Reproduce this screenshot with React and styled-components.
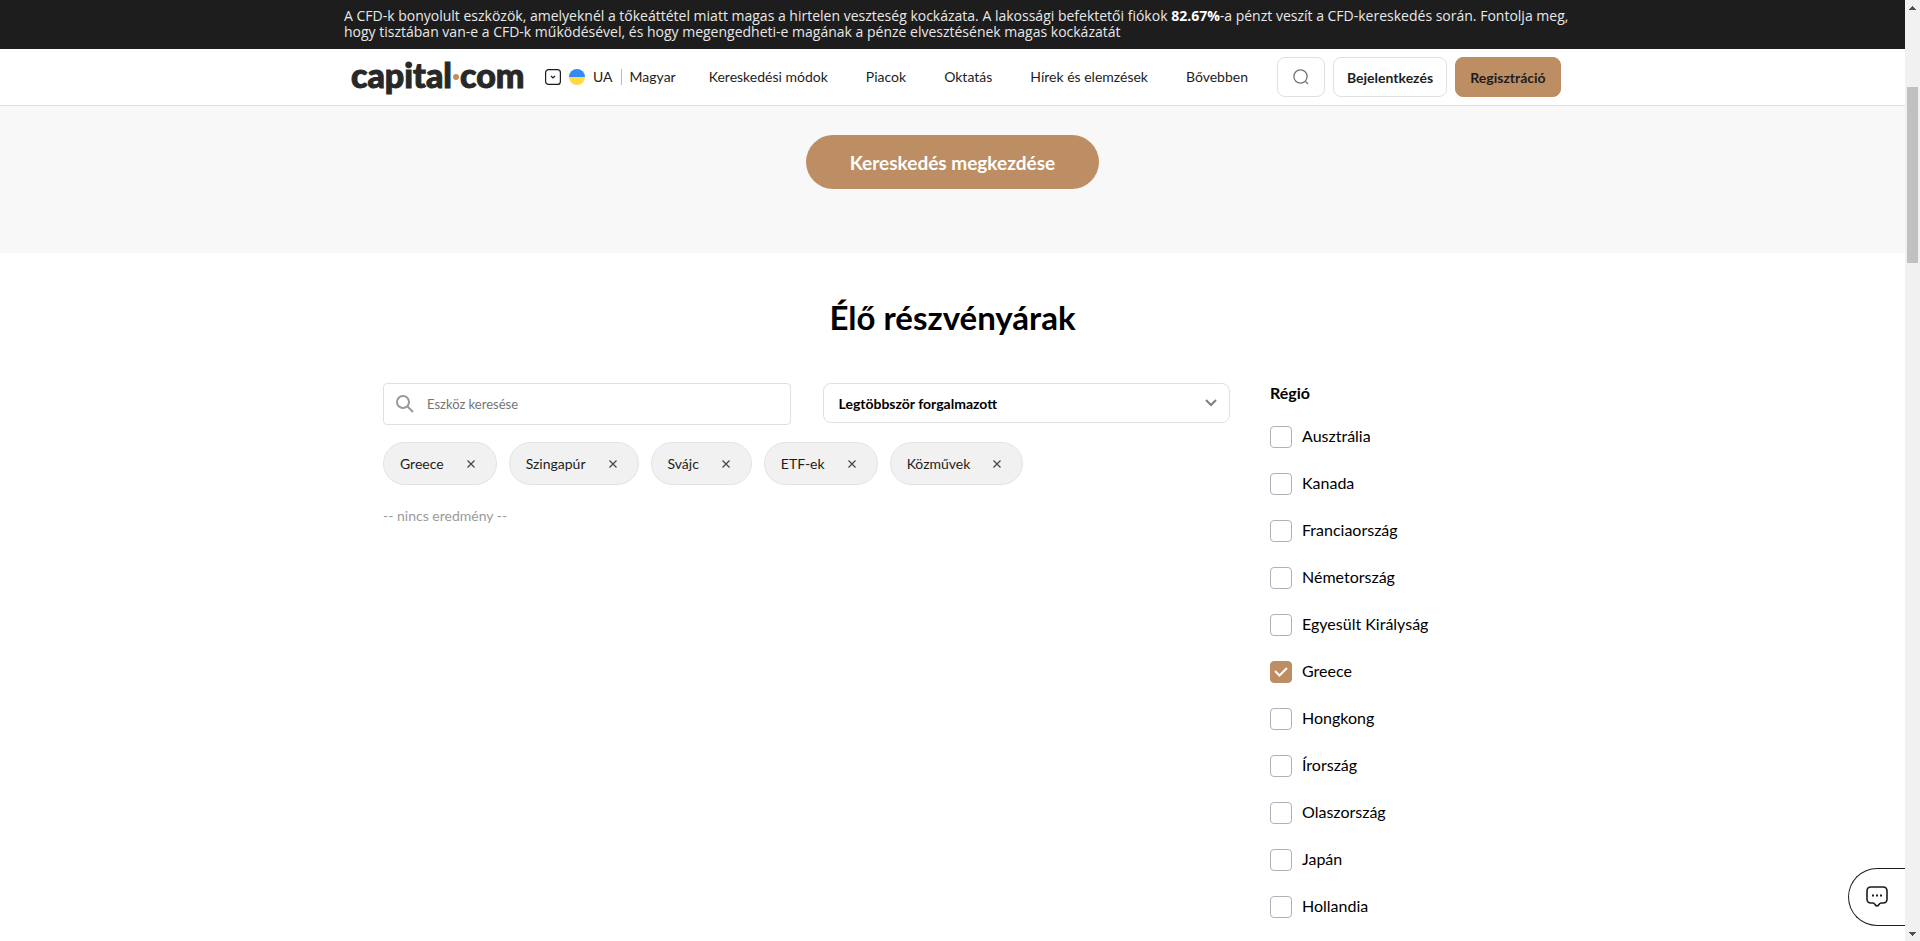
import React, { useState } from "react";
import styled, { createGlobalStyle } from "styled-components";

const GlobalStyle = createGlobalStyle`
  *, *::before, *::after { box-sizing: border-box; }
  body {
    margin: 0;
    background: #fff;
    color: #000;
    font-family: Lato, "Open Sans", sans-serif;
    font-size: 14px;
  }
  button, input, select { font-family: inherit; }
`;

const Frame = styled.div`
  display: grid;
  grid-template-columns: minmax(0, 1fr) 15px;
  height: 100vh;
  overflow: hidden;
`;

const Page = styled.div`
  overflow: hidden;
`;

const Container = styled.div`
  width: 100%;
  max-width: 1217px;
  margin: 0 auto;
`;

const Banner = styled.aside`
  background: #1d1d1d;
  color: #e8e8e8;
  padding: 8px 0 9px;
  font-family: "Open Sans", sans-serif;
  font-size: 14px;
  line-height: 16px;
  p { margin: 0; }
  b { color: #fff; font-weight: 700; }
  @media (min-width: 1400px) {
    white-space: nowrap;
  }
`;

const Header = styled.header`
  background: #fff;
  border-bottom: 1px solid #dedede;
`;

const HeaderRow = styled(Container)`
  display: flex;
  align-items: center;
  height: 56px;
  padding-left: 7px;
`;

const Logo = styled.a`
  display: flex;
  align-items: center;
  width: 171px;
  margin-right: 23px;
  padding-bottom: 4px;
  color: #282828;
  text-decoration: none;
  font-size: 34px;
  line-height: 40px;
  font-weight: 900;
  -webkit-text-stroke: 1px #282828;
`;

const LogoDot = styled.span`
  flex: none;
  width: 6px;
  height: 6px;
  margin: 4px 1px 0;
  border-radius: 50%;
  background: #bd8d63;
`;

const Language = styled.button`
  display: flex;
  align-items: center;
  gap: 8px;
  padding: 0;
  border: 0;
  background: none;
  color: #1d1d1d;
  font-size: 14px;
  line-height: 16px;
`;

const Divider = styled.span`
  width: 1px;
  height: 16px;
  background: #b9b9b9;
`;

const Nav = styled.nav`
  display: flex;
  flex: 1;
  justify-content: space-between;
  margin: 0 29px 0 33px;
`;

const NavLink = styled.a`
  color: #1d1d1d;
  text-decoration: none;
  line-height: 16px;
  white-space: nowrap;
`;

const Actions = styled.div`
  display: flex;
  gap: 8px;
`;

const HeaderButton = styled.button`
  display: flex;
  align-items: center;
  justify-content: center;
  height: 40px;
  min-width: ${(p) => p.$width};
  padding: 0 8px;
  border: 1px solid ${(p) => (p.$primary ? "#bd8d63" : "#e0e0e0")};
  border-radius: 8px;
  background: ${(p) => (p.$primary ? "#bd8d63" : "#fff")};
  color: #1d1d1d;
  font-size: 14px;
  font-weight: 700;
`;

const Hero = styled.section`
  display: flex;
  justify-content: center;
  padding: 29px 0 64px;
  background: #f8f8f8;
`;

const StartButton = styled.button`
  height: 54px;
  min-width: 293px;
  padding: 0 40px;
  border: 0;
  border-radius: 27px;
  background: #bd8d63;
  color: #fff;
  font-size: 19px;
  font-weight: 700;
`;

const Title = styled.h2`
  margin: 0;
  padding: 44px 0 46px;
  text-align: center;
  font-size: 33px;
  line-height: 40px;
  font-weight: 700;
`;

const Content = styled.div`
  display: grid;
  grid-template-columns: minmax(0, 1fr) 252px;
  gap: 40px;
  width: 100%;
  max-width: 1139px;
  margin: 0 auto;
`;

const Filters = styled.form`
  display: grid;
  grid-template-columns: 1fr 1fr;
  align-items: start;
  gap: 32px;
`;

const SearchBox = styled.label`
  display: flex;
  align-items: center;
  gap: 12px;
  height: 42px;
  padding: 0 11px;
  border: 1px solid #e0e0e0;
  border-radius: 4px;
`;

const SearchInput = styled.input`
  flex: 1;
  min-width: 0;
  padding: 0;
  border: 0;
  outline: 0;
  font-size: 13px;
  line-height: 16px;
  &::placeholder { color: #757575; }
`;

const SelectBox = styled.div`
  display: grid;
  align-items: center;
  > * { grid-area: 1 / 1; }
  > svg { justify-self: end; margin-right: 13px; pointer-events: none; }
`;

const Select = styled.select`
  appearance: none;
  width: 100%;
  height: 40px;
  padding: 0 15px;
  border: 1px solid #e0e0e0;
  border-radius: 8px;
  background: #fff;
  color: #000;
  font-size: 14px;
  font-weight: 700;
`;

const Chips = styled.ul`
  display: flex;
  flex-wrap: wrap;
  gap: 12px;
  margin: 17px 0 0;
  padding: 0;
  list-style: none;
`;

const Chip = styled.li`
  display: flex;
  align-items: center;
  gap: 23px;
  height: 43px;
  padding: 0 21px 0 16px;
  border: 1px solid #e3e3e3;
  border-radius: 22px;
  background: #f1f1f1;
  color: #1d1d1d;
  font-size: 14px;
`;

const RemoveButton = styled.button`
  display: flex;
  padding: 0;
  border: 0;
  background: none;
`;

const NoResult = styled.p`
  margin: 23px 0 0;
  color: #9b9b9b;
  font-size: 14px;
  line-height: 16px;
`;

const Regions = styled.fieldset`
  min-width: 0;
  margin: 0;
  padding: 0;
  border: 0;
`;

const RegionTitle = styled.legend`
  margin-bottom: 24px;
  padding: 0;
  font-size: 16px;
  line-height: 19px;
  font-weight: 700;
`;

const RegionList = styled.div`
  display: grid;
  gap: 25px;
`;

const RegionRow = styled.label`
  display: flex;
  align-items: flex-start;
  gap: 10px;
  height: 22px;
  font-size: 16px;
  line-height: 20px;
`;

const Tick = styled.span`
  display: grid;
  place-items: center;
  > * { grid-area: 1 / 1; }
  > svg { pointer-events: none; }
`;

const Checkbox = styled.input`
  appearance: none;
  width: 22px;
  height: 22px;
  margin: 0;
  border: 1px solid #afb1ba;
  border-radius: 4px;
  background: #fff;
  &:checked { border-color: #bd8d63; background: #bd8d63; }
`;

const ChatButton = styled.button`
  position: fixed;
  right: 15px;
  bottom: 15px;
  display: flex;
  align-items: center;
  width: 57px;
  height: 58px;
  padding: 0 0 0 17px;
  border: 1px solid #1d1d1d;
  border-right: 0;
  border-radius: 29px 0 0 29px;
  background: #fff;
`;

const ScrollTrack = styled.div`
  display: flex;
  flex-direction: column;
  align-items: center;
  background: #f1f1f1;
`;

const ScrollThumb = styled.div`
  width: 11px;
  height: 176px;
  margin: 72px 0 auto;
  background: #c1c1c1;
`;

const ScrollArrow = ({ down }) => (
  <svg width="15" height="15" viewBox="0 0 15 15" shapeRendering="crispEdges">
    <path d={down ? "M4 6h7L7.500 10Z" : "M4 10h7L7.500 6Z"} fill="#505050" />
  </svg>
);

const navItems = ["Kereskedési módok", "Piacok", "Oktatás", "Hírek és elemzések", "Bővebben"];
const chipItems = ["Greece", "Szingapúr", "Svájc", "ETF-ek", "Közművek"];
const regionItems = [
  "Ausztrália", "Kanada", "Franciaország", "Németország", "Egyesült Királyság", "Greece",
  "Hongkong", "Írország", "Olaszország", "Japán", "Hollandia",
];

export default function App() {
  const [selected, setSelected] = useState(["Greece"]);
  const toggle = (name) =>
    setSelected((list) => (list.includes(name) ? list.filter((n) => n !== name) : [...list, name]));

  return (
    <Frame>
      <GlobalStyle />
      <Page>
        <Banner>
          <Container>
            <p>
              A CFD-k bonyolult eszközök, amelyeknél a tőkeáttétel miatt magas a hirtelen veszteség kockázata. A lakossági befektetői fiókok <b>82.67%</b>-a pénzt veszít a CFD-kereskedés során. Fontolja meg,
              <br />
              hogy tisztában van-e a CFD-k működésével, és hogy megengedheti-e magának a pénze elvesztésének magas kockázatát
            </p>
          </Container>
        </Banner>
        <Header>
          <HeaderRow>
            <Logo href="#">
              capital<LogoDot />com
            </Logo>
            <Language type="button">
              <svg width="16" height="16" viewBox="0 0 16 16" fill="none" stroke="#1d1d1d">
                <rect x=".6" y=".6" width="14.800" height="14.800" rx="3" strokeWidth="1.200" />
                <path d="m6 7 2 2 2-2" strokeWidth="1.200" />
              </svg>
              <svg width="16" height="16" viewBox="0 0 16 16">
                <path d="M0 8a8 8 0 0 1 16 0Z" fill="#338af3" />
                <path d="M0 8a8 8 0 0 0 16 0Z" fill="#ffda44" />
              </svg>
              <span>UA</span>
              <Divider />
              <span>Magyar</span>
            </Language>
            <Nav>
              {navItems.map((item) => (
                <NavLink href="#" key={item}>{item}</NavLink>
              ))}
            </Nav>
            <Actions>
              <HeaderButton type="button" $width="48px" aria-label="Keresés">
                <svg width="16" height="16" viewBox="0 0 16 16" fill="none" stroke="#757575" strokeWidth="1.300">
                  <circle cx="7.500" cy="7.500" r="6.600" />
                  <path d="m12.500 12.500 2.500 2.500" />
                </svg>
              </HeaderButton>
              <HeaderButton type="button" $width="114px">Bejelentkezés</HeaderButton>
              <HeaderButton type="button" $width="106px" $primary>Regisztráció</HeaderButton>
            </Actions>
          </HeaderRow>
        </Header>
        <Hero>
          <StartButton type="button">Kereskedés megkezdése</StartButton>
        </Hero>
        <main>
          <Title>Élő részvényárak</Title>
          <Content>
            <div>
              <Filters>
                <SearchBox>
                  <svg width="20" height="20" viewBox="0 0 20 20" fill="none" stroke="#999" strokeWidth="2">
                    <circle cx="8" cy="8" r="6" />
                    <path d="m12.500 12.500 5.500 5.500" />
                  </svg>
                  <SearchInput type="text" aria-label="Eszköz keresése" placeholder="Eszköz keresése" />
                </SearchBox>
                <SelectBox>
                  <Select aria-label="Rendezés">
                    <option>Legtöbbször forgalmazott</option>
                  </Select>
                  <svg width="12" height="8" viewBox="0 0 12 8" fill="none" stroke="#808080" strokeWidth="2">
                    <path d="m1 1 5 5 5-5" />
                  </svg>
                </SelectBox>
              </Filters>
              <Chips>
                {chipItems.map((item) => (
                  <Chip key={item}>
                    {item}
                    <RemoveButton type="button" aria-label={`${item} eltávolítása`}>
                      <svg width="8" height="8" viewBox="0 0 8 8" stroke="#444" strokeWidth="1.200">
                        <path d="m.5.5 7 7M7.500.5l-7 7" />
                      </svg>
                    </RemoveButton>
                  </Chip>
                ))}
              </Chips>
              <NoResult>-- nincs eredmény --</NoResult>
            </div>
            <Regions>
              <RegionTitle>Régió</RegionTitle>
              <RegionList>
                {regionItems.map((item) => (
                  <RegionRow key={item}>
                    <Tick>
                      <Checkbox type="checkbox" checked={selected.includes(item)} onChange={() => toggle(item)} />
                      {selected.includes(item) && (
                        <svg width="14" height="10" viewBox="0 0 14 10" fill="none" stroke="#fff" strokeWidth="2">
                          <path d="m1 4 4.500 4.500L13 1" />
                        </svg>
                      )}
                    </Tick>
                    {item}
                  </RegionRow>
                ))}
              </RegionList>
            </Regions>
          </Content>
        </main>
        <ChatButton type="button" aria-label="Csevegés">
          <svg width="22" height="22" viewBox="0 0 22 22" fill="none" stroke="#1d1d1d" strokeWidth="1.600">
            <path d="M5 1h12q4 0 4 4v8q0 4-4 4h-2c-2 0-2 3-4 3s-2-3-4-3H5q-4 0-4-4V5q0-4 4-4Z" />
            <path d="M6 9.500h2M10 9.500h2M14 9.500h2" strokeWidth="2" />
          </svg>
        </ChatButton>
      </Page>
      <ScrollTrack>
        <ScrollArrow />
        <ScrollThumb />
        <ScrollArrow down />
      </ScrollTrack>
    </Frame>
  );
}
